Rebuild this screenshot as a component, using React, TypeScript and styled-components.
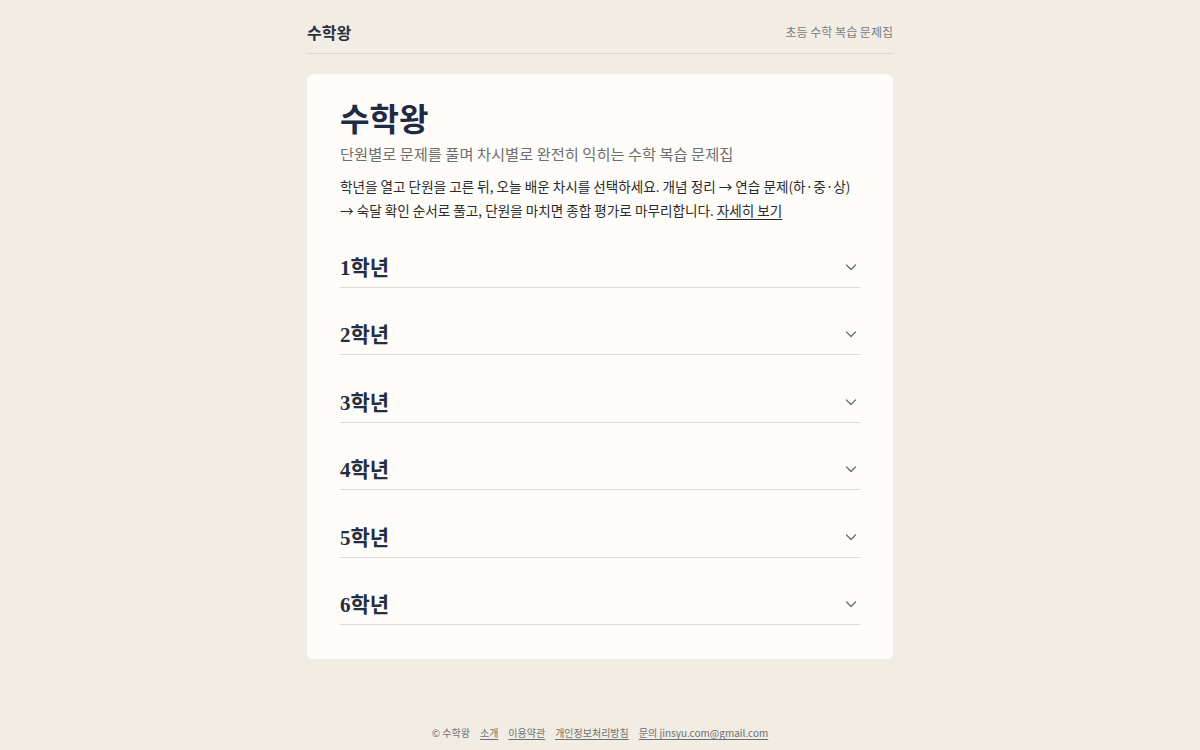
import React from 'react';
import styled, { createGlobalStyle } from 'styled-components';

const GRADES = ['1학년', '2학년', '3학년', '4학년', '5학년', '6학년'];

const GlobalStyle = createGlobalStyle`
  html, body {
    margin: 0;
    padding: 0;
    background: #f1ede5;
  }
  body {
    font-family: "Noto Sans CJK KR", "Noto Sans", sans-serif;
    color: #1f2937;
  }
`;

const Page = styled.div`
  min-height: 100vh;
  display: flex;
  flex-direction: column;
  align-items: center;
  box-sizing: border-box;
`;

const Wrap = styled.div`
  width: 586px;
`;

const Header = styled.header`
  display: flex;
  justify-content: space-between;
  align-items: center;
  padding: 20px 0 9px;
  border-bottom: 1px solid #dcd8cf;
`;

const Brand = styled.div`
  font-size: 16px;
  line-height: 24px;
  font-weight: 700;
  color: #2a3142;
`;

const Tagline = styled.div`
  font-size: 12px;
  line-height: 18px;
  color: #7b7b7b;
`;

const Card = styled.main`
  margin-top: 20px;
  background: #fdfcf8;
  border-radius: 6px;
  padding: 24px 33px 34px;
`;

const Title = styled.h1`
  margin: 0;
  font-size: 32px;
  line-height: 39px;
  font-weight: 700;
  color: #1f2a44;
`;

const Subtitle = styled.p`
  margin: 5px 0 0;
  font-size: 15.3px;
  line-height: 22px;
  color: #6f6f6f;
`;

const Intro = styled.p`
  margin: 10px 0 0;
  font-size: 13.6px;
  line-height: 24px;
  color: #2b2b2b;
`;

const More = styled.a`
  color: #2b2b2b;
  text-decoration: underline;
  text-underline-offset: 3px;
`;

const Grade = styled.div`
  padding: 33.5px 0 5px;
  border-bottom: 1px solid #dedbd5;
  &:first-of-type {
    padding-top: 31.5px;
  }
`;

const GradeHead = styled.div`
  display: flex;
  justify-content: space-between;
  align-items: center;
`;

const GradeTitle = styled.h2`
  margin: 0;
  font-family: "Liberation Serif", "Noto Sans CJK KR", serif;
  font-size: 21px;
  line-height: 28px;
  font-weight: 700;
  color: #262d40;
`;

const Chevron = styled.svg`
  margin-right: 2px;
  margin-top: -2px;
`;

const Footer = styled.footer`
  margin-top: auto;
  padding: 24px 0 9px;
  display: flex;
  gap: 10px;
  font-size: 10px;
  line-height: 16px;
  color: #6f6f6f;
`;

const FootLink = styled.a`
  color: #6f6f6f;
  text-decoration: underline;
  text-underline-offset: 2px;
`;

export default function App() {
  return (
    <>
      <GlobalStyle />
      <Page>
        <Wrap>
          <Header>
            <Brand>수학왕</Brand>
            <Tagline>초등 수학 복습 문제집</Tagline>
          </Header>
          <Card>
            <Title>수학왕</Title>
            <Subtitle>단원별로 문제를 풀며 차시별로 완전히 익히는 수학 복습 문제집</Subtitle>
            <Intro>
              학년을 열고 단원을 고른 뒤, 오늘 배운 차시를 선택하세요. 개념 정리 → 연습 문제(하·중·상)
              <br />→ 숙달 확인 순서로 풀고, 단원을 마치면 종합 평가로 마무리합니다.{' '}
              <More href="#">자세히 보기</More>
            </Intro>
            <div>
              {GRADES.map((g) => (
                <Grade key={g}>
                  <GradeHead>
                    <GradeTitle>{g}</GradeTitle>
                    <Chevron width="14" height="14" viewBox="0 0 14 14" fill="none">
                      <path d="M2.5 5 L7 9.5 L11.5 5" stroke="#6b6b6b" strokeWidth="1.2" strokeLinecap="round" strokeLinejoin="round" />
                    </Chevron>
                  </GradeHead>
                </Grade>
              ))}
            </div>
          </Card>
        </Wrap>
        <Footer>
          <span>© 수학왕</span>
          <FootLink href="#">소개</FootLink>
          <FootLink href="#">이용약관</FootLink>
          <FootLink href="#">개인정보처리방침</FootLink>
          <FootLink href="#">문의 jinsyu.com@gmail.com</FootLink>
        </Footer>
      </Page>
    </>
  );
}
